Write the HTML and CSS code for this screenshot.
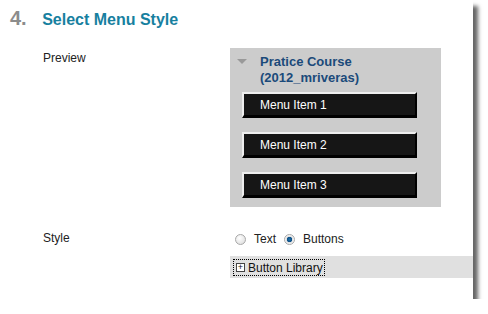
FILE: index.html
```html
<!DOCTYPE html>
<html lang="en">
<head>
    <meta charset="UTF-8">
    <title>Select Menu Style</title>
    <link rel="stylesheet" href="styles.css">
</head>
<body>
    <div class="panel">
        <h2 class="step"><span class="step-num">4.</span> Select Menu Style</h2>

        <div class="row preview-row">
            <div class="label">Preview</div>
            <div class="preview">
                <div class="course">
                    <span class="arrow"></span>
                    <span class="course-name">Pratice Course<br>(2012_mriveras)</span>
                </div>
                <div class="menu-btn">Menu Item 1</div>
                <div class="menu-btn">Menu Item 2</div>
                <div class="menu-btn">Menu Item 3</div>
            </div>
        </div>

        <div class="row style-row">
            <div class="label">Style</div>
            <div class="options">
                <label class="radio"><span class="dot"></span>Text</label>
                <label class="radio"><span class="dot checked"></span>Buttons</label>
            </div>
        </div>

        <div class="library">
            <span class="library-link"><span class="plus">+</span>Button Library</span>
        </div>
    </div>
</body>
</html>
```

FILE: styles.css
```css
body {
    margin: 0;
    background: #fff;
    font-family: "Liberation Sans", Arial, sans-serif;
    font-size: 12px;
    color: #222;
}

.panel {
    width: 473px;
    height: 299px;
    background: #fff;
    box-shadow: 5px 6px 4px rgba(0,0,0,0.6);
    box-sizing: border-box;
    padding-top: 9px;
}

.step {
    margin: 0 0 0 10px;
    font-size: 16px;
    font-weight: bold;
    color: #17809f;
    line-height: 18px;
}

.step-num {
    color: #8c8c8c;
    font-size: 20px;
    margin-right: 11px;
}

.row {
    display: flex;
}

.label {
    width: 187px;
    padding-left: 43px;
}

.preview-row {
    margin-top: 19px;
}

.preview-row .label {
    padding-top: 3px;
}

.preview {
    width: 211px;
    height: 159px;
    background: #cccccc;
    box-sizing: border-box;
    padding: 6px 0 0 12px;
}

.course {
    display: flex;
    align-items: flex-start;
}

.arrow {
    width: 0;
    height: 0;
    border-left: 5px solid transparent;
    border-right: 5px solid transparent;
    border-top: 5px solid #999;
    margin: 5px 13px 0 -5px;
}

.course-name {
    font-size: 13px;
    font-weight: bold;
    color: #1b4a7a;
    line-height: 16px;
}

.menu-btn {
    width: 175px;
    height: 26px;
    box-sizing: border-box;
    background: #161616;
    border-top: 2px solid #eee;
    border-left: 2px solid #eee;
    border-bottom: 3px solid #000;
    border-right: 2px solid #000;
    color: #fff;
    line-height: 19px;
    padding: 2px 0 0 16px;
    margin-bottom: 14px;
}

.course + .menu-btn {
    margin-top: 6px;
}

.style-row {
    margin-top: 24px;
    line-height: 14px;
}

.options {
    display: flex;
    gap: 8px;
    padding-left: 5px;
    margin-top: 1px;
}

.radio {
    display: flex;
    align-items: center;
    gap: 8px;
}

.dot {
    width: 11px;
    height: 11px;
    border-radius: 50%;
    box-sizing: border-box;
    border: 1px solid #a8a8a8;
    background: radial-gradient(circle at 40% 35%, #fff, #d8d8d8);
}

.dot.checked {
    background: radial-gradient(circle, #1d6fa8 0, #0d4f86 2.5px, #e0e0e0 3px, #fff 5px);
}

.library {
    margin: 10px 0 0 230px;
    height: 22px;
    background: #e0e0e0;
    padding: 3px 0 0 3px;
    box-sizing: border-box;
}

.library-link {
    display: inline-flex;
    align-items: center;
    gap: 3px;
    border: 1px dotted #000;
    height: 17px;
    box-sizing: border-box;
    padding-right: 1px;
    color: #111;
}

.plus {
    width: 9px;
    height: 9px;
    border: 1px solid #444;
    box-sizing: border-box;
    background: #fff;
    font-size: 9px;
    line-height: 6px;
    text-align: center;
    margin-left: 2px;
}
```
